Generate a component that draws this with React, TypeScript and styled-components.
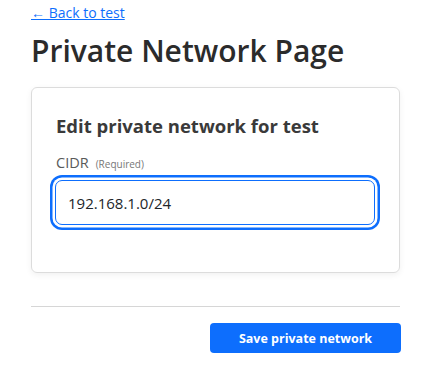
import React from 'react';
import styled, { createGlobalStyle } from 'styled-components';

const GlobalStyle = createGlobalStyle`
  body {
    margin: 0;
    background: #fff;
    font-family: "Open Sans", "Noto Sans", Arial, sans-serif;
    color: #212529;
  }
`;

const Page = styled.div`
  width: 369px;
  padding: 1px 0 0 31px;
`;

const BackLink = styled.a`
  display: inline-block;
  font-size: 14px;
  line-height: 20px;
  color: #0d6efd;
  text-decoration: underline;
`;

const Title = styled.h1`
  margin: 9px 0 17px;
  font-size: 30px;
  font-weight: 600;
  line-height: 38px;
  color: #2b2b2b;
`;

const Card = styled.div`
  border: 1px solid #dcdcdc;
  border-radius: 6px;
  box-shadow: 0 2px 6px rgba(0, 0, 0, 0.06);
  padding: 25px 24px 47px;
`;

const CardTitle = styled.h4`
  margin: 0 0 14px;
  font-size: 18.5px;
  font-weight: 700;
  line-height: 26px;
  color: #3a3a3a;
`;

const Label = styled.label`
  display: flex;
  align-items: baseline;
  gap: 7px;
  font-size: 14.5px;
  line-height: 20px;
  color: #595959;
  margin-bottom: 6px;
`;

const Hint = styled.span`
  font-size: 10px;
  color: #777;
`;

const Input = styled.input`
  box-sizing: border-box;
  display: block;
  width: 320px;
  height: 45px;
  margin-left: -1px;
  padding: 0 12px;
  font-family: inherit;
  font-size: 15px;
  color: #212529;
  border: 1.5px solid #0d6efd;
  border-radius: 7px;
  outline: none;
  box-shadow: 0 0 0 2.5px #fff, 0 0 0 5px #0d6efd;
`;

const Divider = styled.hr`
  margin: 33px 0 16px;
  border: 0;
  border-top: 1px solid #d6d6d6;
`;

const Actions = styled.div`
  display: flex;
  justify-content: flex-end;
  margin-right: -1px;
`;

const SaveButton = styled.button`
  width: 191px;
  height: 30px;
  border: 0;
  border-radius: 4px;
  background: #0d6efd;
  color: #fff;
  font-family: inherit;
  font-size: 12.5px;
  font-weight: 700;
  cursor: pointer;
`;

export default function App() {
  return (
    <>
      <GlobalStyle />
      <Page>
        <BackLink href="#">← Back to test</BackLink>
        <Title>Private Network Page</Title>
        <Card>
          <CardTitle>Edit private network for test</CardTitle>
          <Label>
            CIDR <Hint>(Required)</Hint>
          </Label>
          <Input defaultValue="192.168.1.0/24" />
        </Card>
        <Divider />
        <Actions>
          <SaveButton>Save private network</SaveButton>
        </Actions>
      </Page>
    </>
  );
}
